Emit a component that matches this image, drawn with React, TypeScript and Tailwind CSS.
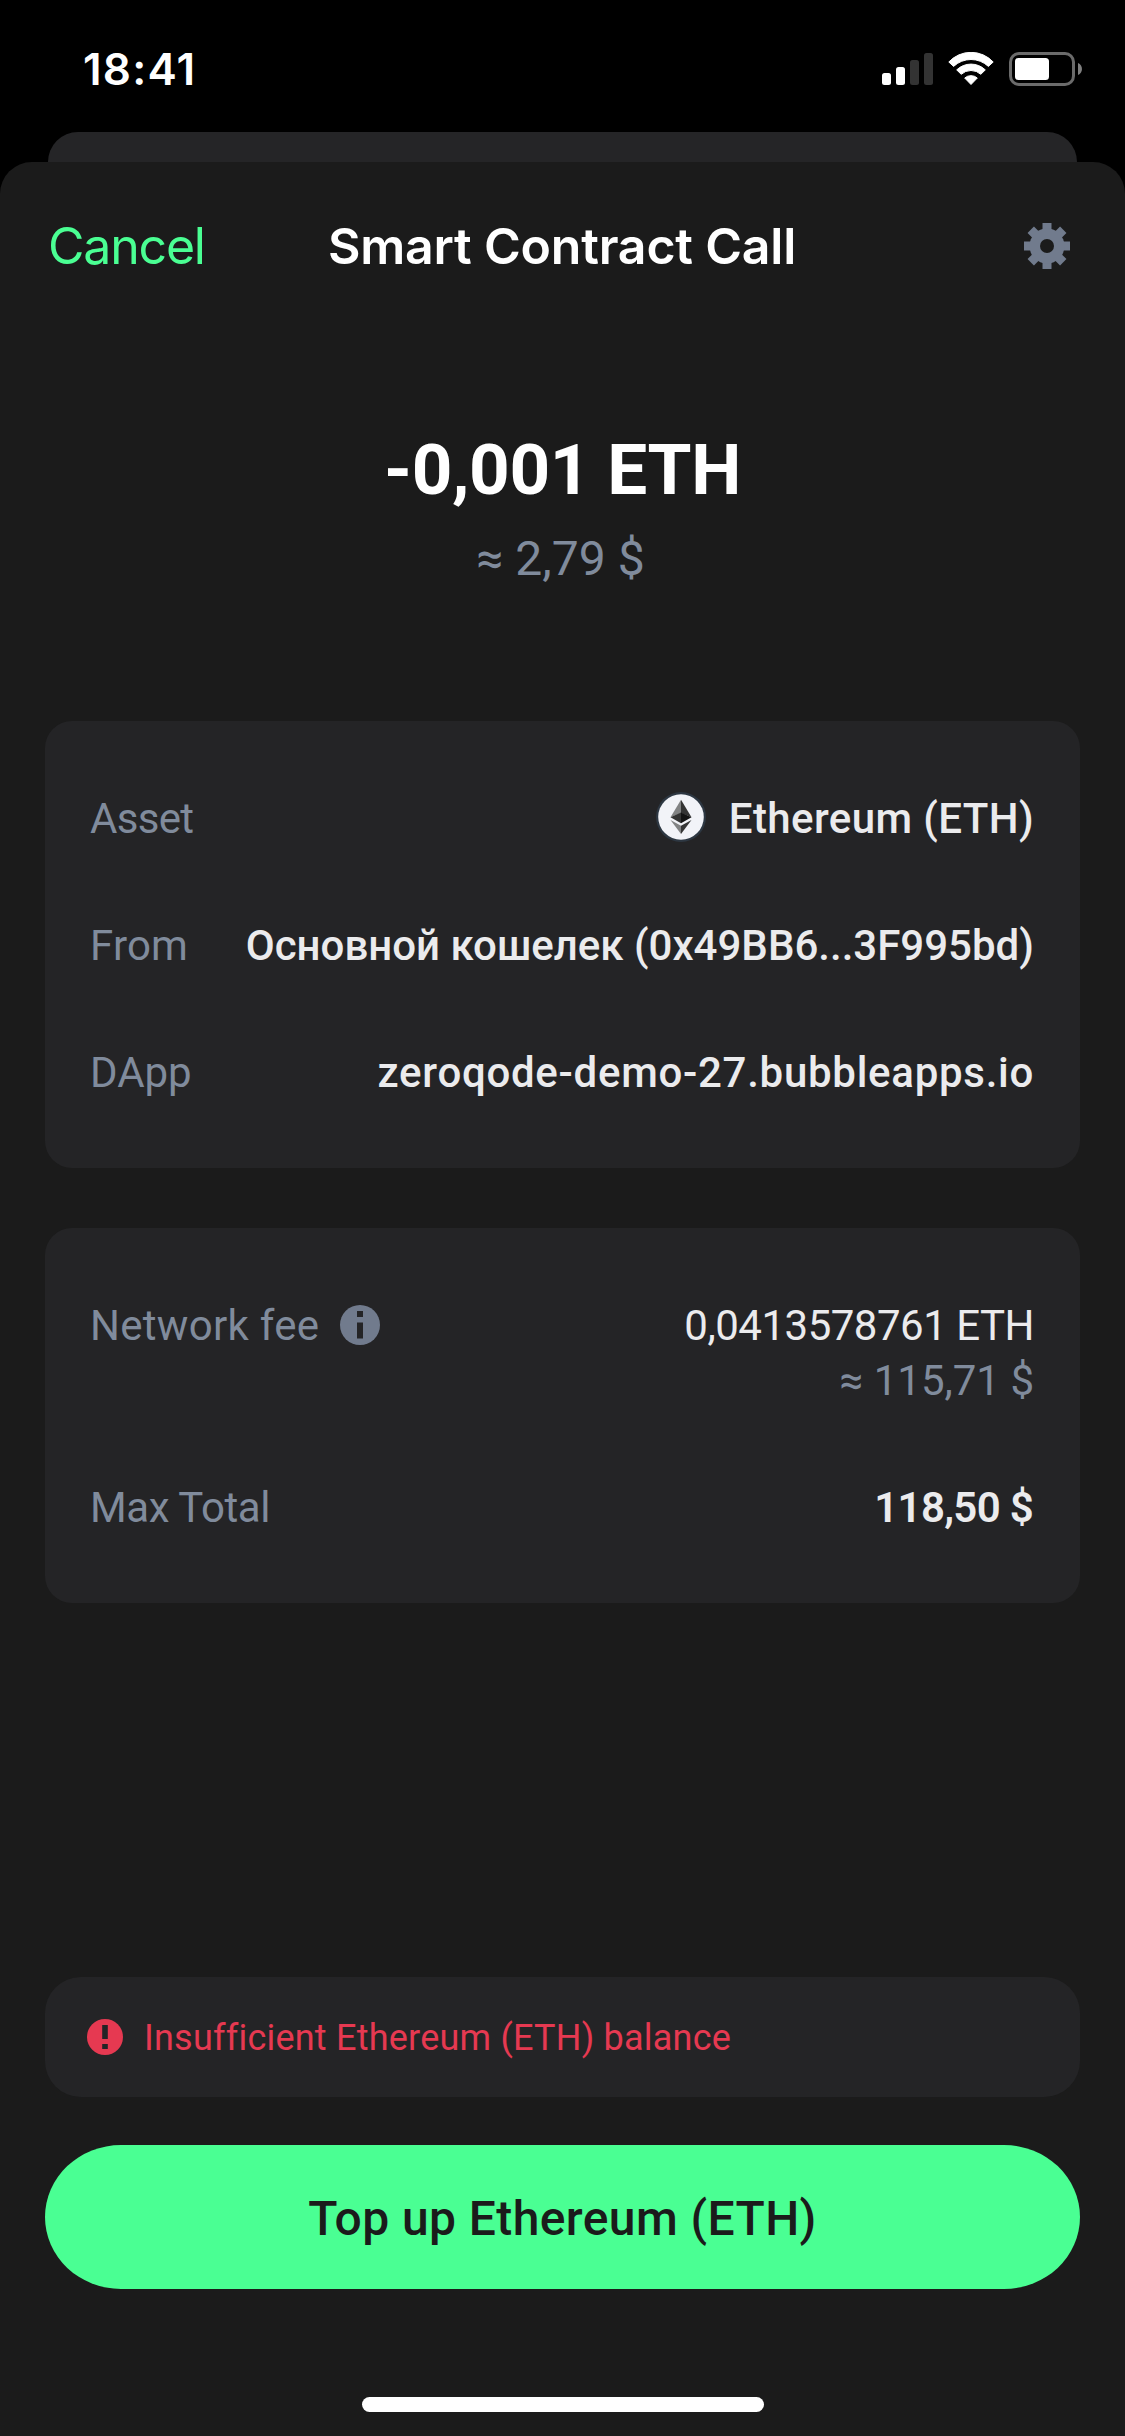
function SignalIcon() {
  return (
    <svg width="51" height="32" viewBox="0 0 51 32">
      <rect x="0" y="20" width="9" height="12" rx="2.5" fill="#fff" />
      <rect x="14" y="14" width="9" height="18" rx="2.5" fill="#fff" />
      <rect x="28" y="7" width="9" height="25" rx="2.5" fill="#333" />
      <rect x="42" y="0" width="9" height="32" rx="2.5" fill="#333" />
    </svg>
  );
}

function WifiIcon() {
  return (
    <svg width="46" height="34" viewBox="0 0 46 34" fill="#fff" stroke="#fff" strokeWidth="1" strokeLinejoin="round">
      <path d="M0.8 10A30.3 30.3 0 0 1 45.2 10L40.4 14.4A25.4 25.4 0 0 0 5.6 14.4Z" />
      <path d="M8.7 17.9A20.5 20.5 0 0 1 37.3 17.9L32.8 22.3A14.5 14.5 0 0 0 13.2 22.3Z" />
      <path d="M16.7 26A9.6 9.6 0 0 1 29.3 26L23 32.5Z" />
    </svg>
  );
}

function BatteryIcon() {
  return (
    <svg width="73" height="34" viewBox="0 0 73 34">
      <rect x="1.5" y="1.5" width="63" height="31" rx="8.5" fill="none" stroke="#6b6b6b" strokeWidth="3" />
      <rect x="6" y="6" width="34" height="22" rx="3.5" fill="#fff" />
      <path d="M69 11C74.3 13 74.3 21 69 23Z" fill="#808080" />
    </svg>
  );
}

function GearIcon() {
  return (
    <svg width="46" height="46" viewBox="-23 -23 46 46" fill="#717b8d">
      {[0, 45, 90, 135].map((angle) => (
        <rect key={angle} x="-4.5" y="-23" width="9" height="46" transform={`rotate(${angle})`} />
      ))}
      <circle r="17.5" />
      <circle r="7" fill="#1b1b1b" />
    </svg>
  );
}

function EthereumIcon() {
  return (
    <svg width="50" height="50" viewBox="0 0 50 50">
      <circle cx="25" cy="25" r="25" fill="#2d3742" />
      <circle cx="25" cy="25" r="22.8" fill="#f2f3f8" />
      <path d="M25 7.7L14.5 25.3L25 21Z" fill="#828384" />
      <path d="M25 7.7L35.5 25.3L25 21Z" fill="#343434" />
      <path d="M14.5 25.3L25 20.6V31.3Z" fill="#343434" />
      <path d="M35.5 25.3L25 20.6V31.3Z" fill="#131313" />
      <path d="M14.5 28L25 33.7V42Z" fill="#828384" />
      <path d="M35.5 28L25 33.7V42Z" fill="#363636" />
    </svg>
  );
}

function InfoIcon() {
  return (
    <svg width="40" height="40" viewBox="0 0 40 40">
      <circle cx="20" cy="20" r="20" fill="#717b8d" />
      <path d="M17 6H23V12H17ZM17 17.5H23V33.5H17Z" fill="#242426" />
    </svg>
  );
}

function AlertIcon() {
  return (
    <svg width="36" height="36" viewBox="0 0 36 36">
      <circle cx="18" cy="18" r="18" fill="#e63951" />
      <path d="M15.2 6H20.8V20H15.2ZM15.2 25H20.8V30H15.2Z" fill="#242426" />
    </svg>
  );
}

export default function App() {
  return (
    <div className="h-[2436px] w-[1125px] overflow-hidden bg-black font-[Roboto,sans-serif] whitespace-nowrap text-[#808b9c]">
      <div className="flex h-[132px] items-center pt-[6px] pr-[43px] pl-[83px]">
        <span className="font-[Inter,sans-serif] text-[44px] leading-none font-semibold tracking-[1.2px] text-white">18:41</span>
        <div className="ml-auto flex items-center">
          <SignalIcon />
          <div className="ml-[15px]"><WifiIcon /></div>
          <div className="ml-[15px]"><BatteryIcon /></div>
        </div>
      </div>

      <div className="mx-[48px] h-[30px] rounded-t-[30px] bg-[#252527]" />

      <main className="flex h-[2274px] flex-col rounded-t-[32px] bg-[#1b1b1b] px-[45px]">
        <header className="grid h-[168px] grid-cols-[1fr_auto_1fr] items-center pr-[10px] pl-[3px] font-[Inter,sans-serif] text-[50px] leading-none">
          <span className="tracking-[-1.2px] text-[#4aff93]">Cancel</span>
          <h1 className="translate-x-[3px] font-semibold tracking-[-0.2px] text-white">Smart Contract Call</h1>
          <div className="justify-self-end"><GearIcon /></div>
        </header>

        <div className="mt-[98px] text-center text-[71px] leading-[84px] font-bold tracking-[-0.4px] text-white">-0,001 ETH</div>
        <div className="mt-[19px] pr-[4px] text-center text-[48px] leading-[56px]">≈ 2,79 $</div>

        <section className="mt-[134px] h-[447px] rounded-[27px] bg-[#242426] pt-[34px] pr-[46px] pl-[45px] text-[42px] leading-[55px]">
          <div className="flex h-[127px] items-center">
            <span className="tracking-[-0.7px]">Asset</span>
            <div className="mr-[23px] ml-auto -mt-1"><EthereumIcon /></div>
            <span className="font-medium tracking-[0.4px] text-[#ebebed]">Ethereum (ETH)</span>
          </div>
          <div className="flex h-[127px] items-center justify-between">
            <span className="tracking-[0.2px]">From</span>
            <span className="font-medium tracking-[0.01px] text-[#ebebed]">Основной кошелек (0x49BB6...3F995bd)</span>
          </div>
          <div className="flex h-[127px] items-center justify-between">
            <span>DApp</span>
            <span className="font-medium tracking-[0.72px] text-[#ebebed]">zeroqode-demo-27.bubbleapps.io</span>
          </div>
        </section>

        <section className="mt-[60px] h-[375px] rounded-[27px] bg-[#242426] pt-[70px] pr-[46px] pl-[45px] text-[42px] leading-[55px]">
          <div className="flex items-start justify-between">
            <div className="flex items-center gap-[21px]">
              <span className="tracking-[0.3px]">Network fee</span>
              <div className="-mt-[2px]"><InfoIcon /></div>
            </div>
            <div className="text-right">
              <div className="tracking-[-0.5px] text-[#ebebed]">0,0413578761 ETH</div>
              <div>≈ 115,71 $</div>
            </div>
          </div>
          <div className="mt-[72px] flex items-center justify-between">
            <span className="tracking-[-0.4px]">Max Total</span>
            <span className="pr-px font-semibold tracking-[-0.7px] text-[#ebebed]">118,50 $</span>
          </div>
        </section>

        <div className="mt-[374px] flex h-[120px] items-center gap-[21px] rounded-[36px] bg-[#242426] pl-[42px] text-[36px] tracking-[0.22px] text-[#e63951]">
          <AlertIcon />
          <span className="pt-px">Insufficient Ethereum (ETH) balance</span>
        </div>

        <button className="mt-[48px] h-[144px] rounded-[76px/72px] bg-[#4aff93] pt-[3px] text-[48px] font-medium tracking-[0.4px] text-[#1b1b1b]">
          Top up Ethereum (ETH)
        </button>

        <div className="mx-auto mt-[108px] h-[15px] w-[402px] rounded-full bg-white" />
      </main>
    </div>
  );
}
